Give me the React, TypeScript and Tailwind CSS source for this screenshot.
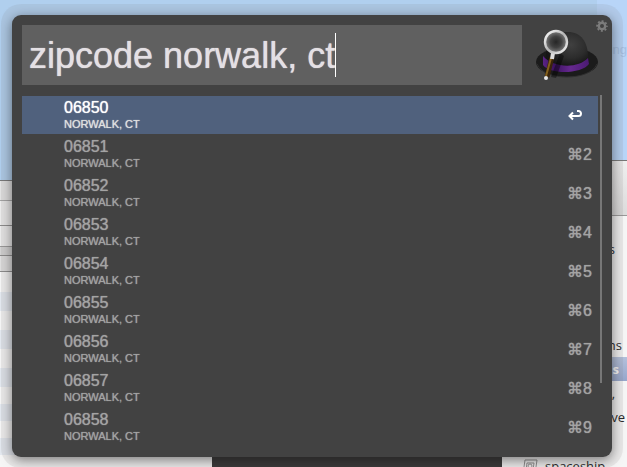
import { useState } from "react";

const results = ["06850", "06851", "06852", "06853", "06854", "06855", "06856", "06857", "06858"].map((zip) => ({
  zip,
  place: "NORWALK, CT",
}));

function LeftWindow() {
  return (
    <div className="absolute top-[180px] bottom-0 left-0 w-[212px] border-t border-[#777] bg-[#f6f6f6]">
      <div className="h-5 border-b border-[#a5a5a5] bg-[#e4e4e4]" />
      <div className="h-[25px] border-b border-[#8c8c8c] bg-[#ececec]" />
      <div className="h-[21px] border-b border-[#9a9a9a] bg-[#ececec]" />
      <div className="h-[9px] border-b border-[#8c8c8c] bg-[#d4d4d4]" />
      <div className="h-4 border-b border-[#8c8c8c] bg-[#e0e0e0]" />
      <div className="h-5" />
      <div className="h-[19px] bg-[#e4e9f0]" />
      <div className="h-[19px]" />
      <div className="h-[19px] bg-[#e4e9f0]" />
      <div className="h-[19px]" />
      <div className="h-[19px] bg-[#e4e9f0]" />
      <div className="h-[17px]" />
      <div className="h-[17px] bg-[#e4e9f0]" />
      <div className="h-[17px]" />
      <div className="h-[17px] bg-[#e4e9f0]" />
    </div>
  );
}

function RightWindow() {
  return (
    <div className="absolute top-[160px] right-0 bottom-0 w-[125px] border-t border-[#777] bg-[#f6f6f6] font-['Open_Sans',sans-serif] text-[13px] text-[#222]">
      <div className="h-[55px] border-b border-[#999] bg-linear-to-b from-[#f0f0f0] to-[#dcdcdc]" />
      <div className="flex flex-col text-right">
        <p className="mt-[21px] h-6 pr-3 leading-6">s</p>
        <p className="mt-[72px] h-6 pr-[5px] leading-6">ns</p>
        <p className="h-6 bg-linear-to-b from-[#b4c1dc] to-[#97a7cc] pr-2 leading-6 font-bold text-white">s</p>
        <p className="h-6 pr-3 leading-6">,</p>
        <p className="h-6 pr-0.5 leading-6">ve</p>
      </div>
      <div className="mt-[26px] flex h-6 items-center gap-[7px] pl-5">
        <svg viewBox="0 0 16 16" className="size-4" fill="none" stroke="#8d8d8d">
          <path d="M3 1h12l-2 14H1zM5 4h7l-1 7H4z" />
          <circle cx="8" cy="7" r="2" />
        </svg>
        <span>spaceship</span>
      </div>
    </div>
  );
}

function Hat() {
  return (
    <svg viewBox="0 0 64 54" className="h-[54px] w-16 shrink-0" aria-label="Alfred">
      <defs>
        <radialGradient id="crown" cx="0.6" cy="0.35" r="0.6">
          <stop offset="0" stopColor="#404040" />
          <stop offset="0.6" stopColor="#2c2c2c" />
          <stop offset="1" stopColor="#151515" />
        </radialGradient>
        <radialGradient id="glass">
          <stop offset="0" stopColor="#262626" />
          <stop offset="0.5" stopColor="#404040" />
          <stop offset="1" stopColor="#808080" />
        </radialGradient>
        <linearGradient id="band">
          <stop offset="0" stopColor="#5a2485" />
          <stop offset="0.25" stopColor="#3c1261" />
          <stop offset="0.6" stopColor="#66298f" />
          <stop offset="1" stopColor="#4a1a72" />
        </linearGradient>
        <linearGradient id="rim" x1="0" y1="0" x2="1" y2="1">
          <stop offset="0" stopColor="#fff" />
          <stop offset="0.5" stopColor="#b5b5b5" />
          <stop offset="1" stopColor="#f4f4f4" />
        </linearGradient>
      </defs>
      <ellipse cx="32" cy="34" rx="31" ry="15" fill="#1b1b1b" />
      <path d="M2 36c5 10 17 13 30 13s26-4 30-13" fill="none" stroke="#303030" />
      <path d="M10 32C12 14 18 4 33 4c13 0 20 10 20 25v5c-9 9-35 9-43 0z" fill="url(#crown)" />
      <path d="M8 28c10 12 35 13 45 2l1 6c-7 10-39 11-46 1z" fill="url(#band)" />
      <path d="M25 25l-9 24 5 1 8-22z" fill="#000" opacity="0.4" />
      <path d="M17 29l-5 20" stroke="#3a250b" strokeWidth="5" />
      <path d="M16 30l-5 18" stroke="#84601d" strokeWidth="2" />
      <path d="M18 25l-1 6" stroke="#ddd" strokeWidth="4" />
      <circle cx="11" cy="50" r="2" fill="#e8e8e8" />
      <circle cx="21" cy="14" r="11" fill="url(#glass)" stroke="url(#rim)" strokeWidth="2.4" />
    </svg>
  );
}

function Gear() {
  return (
    <svg viewBox="0 0 12 12" className="size-3" fill="none" stroke="#7c7c7c">
      <circle cx="6" cy="6" r="3.2" strokeWidth="2.4" />
      <circle cx="6" cy="6" r="4.9" strokeWidth="1.8" strokeDasharray="1.95 1.9" strokeDashoffset="1" />
    </svg>
  );
}

export default function App() {
  const [query, setQuery] = useState("zipcode norwalk, ct");
  const [selected, setSelected] = useState(0);

  return (
    <div className="relative flex h-screen overflow-hidden bg-[#b0cfee] pt-[15px] pr-[15px] pb-[10px] pl-3 font-['Liberation_Sans',Arial,sans-serif]">
      <div className="absolute top-0 right-0 h-[160px] w-[30px] bg-[#b8d5f8]">
        <span className="absolute top-10 right-0 text-[13px] text-[#a5c1e4]">ing</span>
      </div>
      <LeftWindow />
      <RightWindow />
      <div className="absolute bottom-0 left-[212px] h-5 w-[290px] bg-[#303030]" />

      <main className="relative flex flex-1 flex-col rounded-[9px] bg-[#424242] px-[10px] pt-[10px] shadow-[0_0_0_11px_rgba(130,120,120,0.12),0_3px_12px_rgba(0,0,0,0.5)]">
        <header className="flex items-center gap-[13px] pr-[3px]">
          <label className="flex h-[60px] min-w-0 flex-1 items-center bg-[#606060] pl-[7px]">
            <input
              aria-label="Search"
              value={query}
              onChange={(e) => setQuery(e.target.value)}
              className="field-sizing-content h-11 pt-0.5 text-4xl text-[#e4e0e4] caret-transparent outline-none text-shadow-[0_0_1px_currentColor]"
            />
            <span className="h-11 w-px bg-white" />
          </label>
          <Hat />
        </header>
        <button aria-label="Preferences" className="absolute top-[5px] right-1">
          <Gear />
        </button>

        <div className="mt-[10px] flex gap-0.5">
          <ul className="flex-1 pt-px">
            {results.map((r, i) => (
              <li key={r.zip} className="h-[39px]">
                <button
                  onClick={() => setSelected(i)}
                  className={`flex h-[38px] w-full items-center justify-between pr-[6px] pl-[42px] text-left text-shadow-[0_0_1px_currentColor] ${
                    i === selected ? "bg-[#50617d] text-white" : "text-[#a3a3a3]"
                  }`}
                >
                  <span className="flex flex-col pb-[3px]">
                    <span className="text-base leading-5">{r.zip}</span>
                    <span className={`text-[11px] leading-3 ${i === selected ? "text-[#e0e0e0]" : ""}`}>{r.place}</span>
                  </span>
                  {i === selected ? (
                    <svg viewBox="0 0 14 12" className="mr-[10px] h-3 w-[14px]" fill="none" stroke="#fff" strokeWidth="2">
                      <path d="M9 2h1.500a2.500 2.500 0 0 1 0 5H2M5 3.500L1.500 7L5 10.500" />
                    </svg>
                  ) : (
                    <kbd className="pt-0.5 font-['Liberation_Sans','DejaVu_Sans',sans-serif] text-base">⌘{i + 1}</kbd>
                  )}
                </button>
              </li>
            ))}
          </ul>
          <div className="h-[288px] w-0.5 bg-[#777]" />
        </div>
      </main>
    </div>
  );
}
